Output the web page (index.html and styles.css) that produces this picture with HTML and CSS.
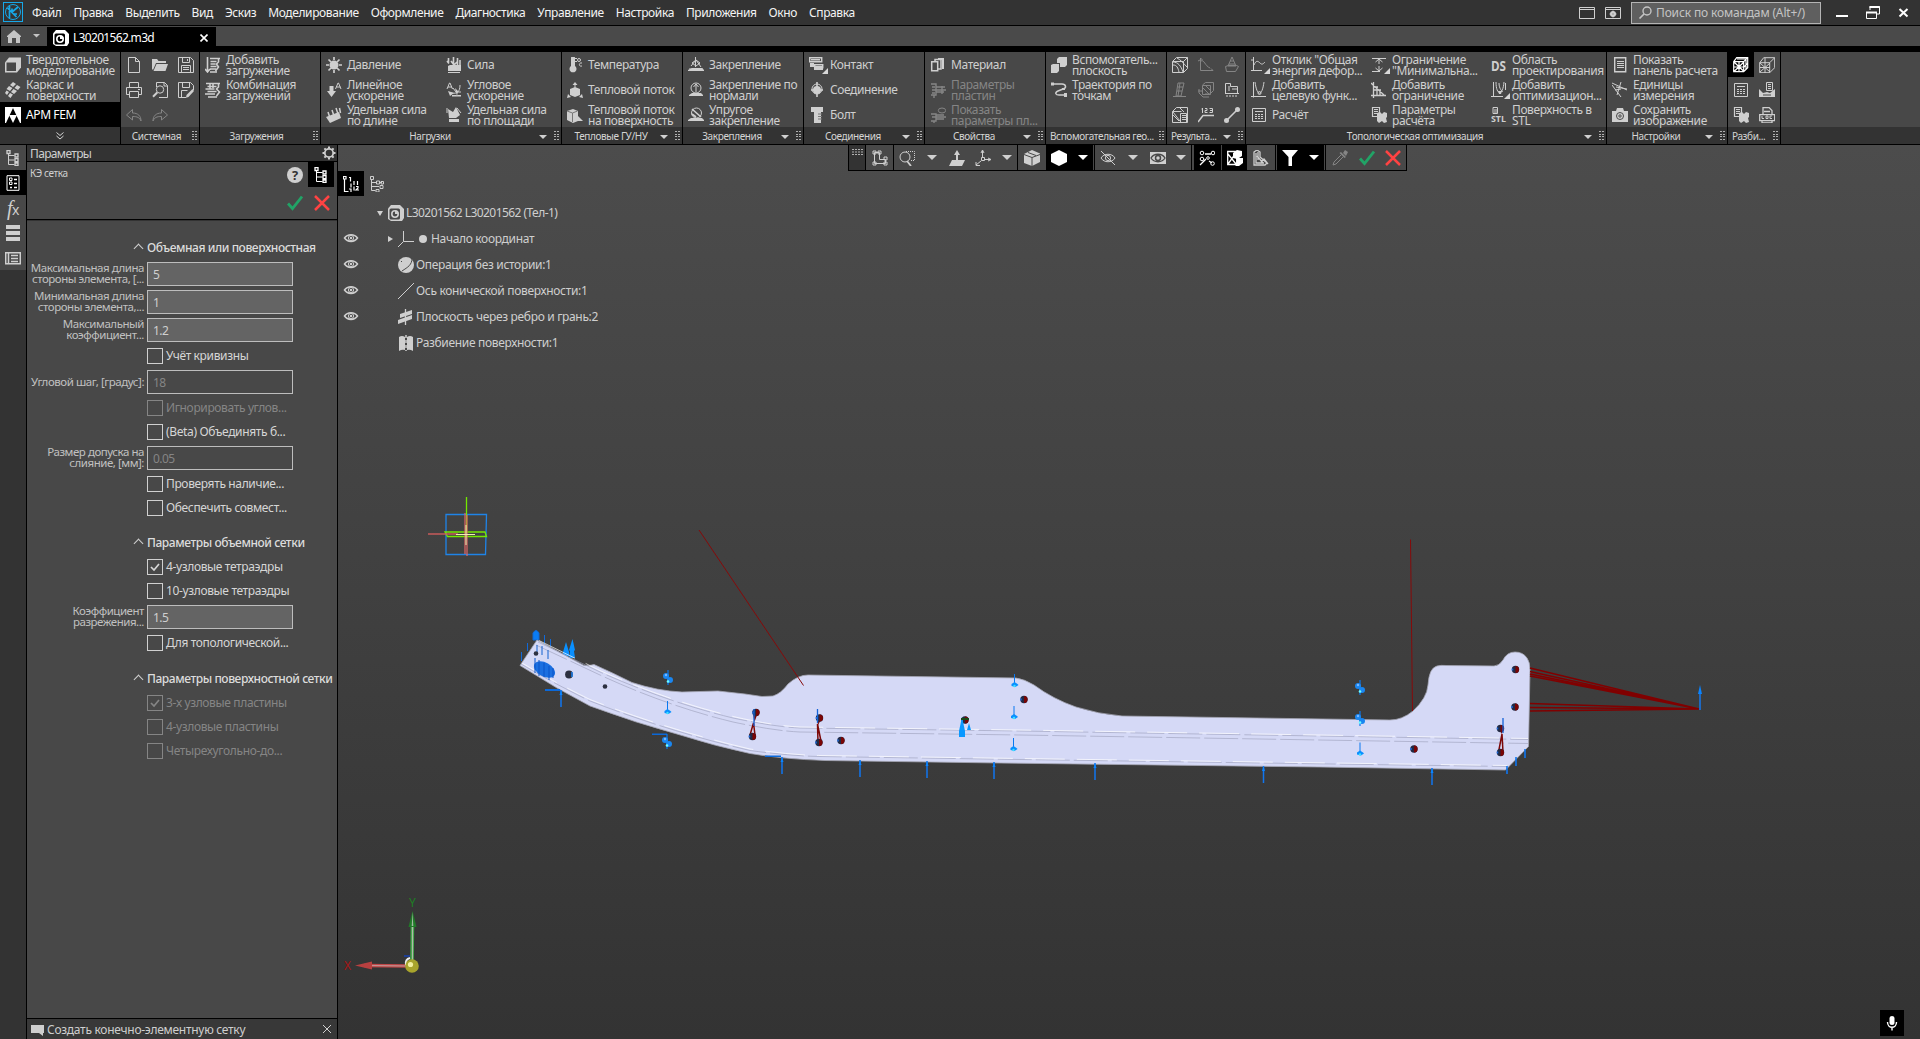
FILE: index.html
```html
<!DOCTYPE html>
<html lang="ru">
<head>
<meta charset="utf-8">
<title>L30201562.m3d</title>
<link rel="stylesheet" href="styles.css">
</head>
<body>
<svg class="defs">
<defs>
<symbol id="box" viewBox="0 0 16 16"><path class="f" d="M0 5.500l4-5h12v10l-4 5H0z"/><path d="M1.500 5.500h9.500v8.500H1.500z" fill="#484848" stroke="none"/></symbol>
<symbol id="frame" viewBox="0 0 16 16"><path class="f" d="M8 0l3 2-3 3-3-2zM12 3l3.500 2-2.500 3-3.500-2zM4 4l3.500 2L5 9 1.500 7zM8.500 7l3.500 2-3 3-3-2zM1.500 8.500L4 10l-2 3-2-2zM5 11l3 1.500L5.500 16 3 14z"/></symbol>
<symbol id="apm" viewBox="0 0 16 16"><path class="f" d="M0 0h16v16H0z"/><path d="M8 1L1 16h14z" fill="#000" stroke="none"/><path class="f" d="M4 8h8l-4 8z"/></symbol>
<symbol id="new" viewBox="0 0 16 16"><path d="M2.500.5h7l4 4v11h-11zM9.500.5v4h4"/></symbol>
<symbol id="open" viewBox="0 0 16 16"><path class="f" d="M0 2h5l1.500 2H14v2H4l-3 7-1-1zM4.500 7H16l-2.500 7H1.500z"/></symbol>
<symbol id="save" viewBox="0 0 16 16"><path d="M.5.5h12l3 3v12H.5zM4.500.5v5h7v-5M3.500 15.500v-7h9v7M9.500 2v2M5 10.500h6M5 12.500h6"/></symbol>
<symbol id="print" viewBox="0 0 16 16"><path d="M3.500 5V.5h9V5M3.500 12.500h-3v-7h15v7h-3M3.500 9.500h9v6h-9zM12 7.500h2"/></symbol>
<symbol id="preview" viewBox="0 0 16 16"><path d="M4.500 5V.5h8l3 3v12H7M12 .5v3.500h3.500"/><circle cx="8" cy="7.500" r="3.700"/><path stroke-width="2" d="M5.200 10.500L1 14.700"/></symbol>
<symbol id="saveas" viewBox="0 0 16 16"><path d="M.5.5h12l3 3V8M.5.500v15H8M4.500.5v5h7v-5M3.500 15.500v-7h6"/><path class="f" d="M8.500 13l6-6 1.500 2-5.500 6-2.500.7z"/></symbol>
<symbol id="undo" viewBox="0 0 16 16"><path d="M6.500 2.500l-6 5.500 6 5v-3.500c5 0 7 1 8.500 4.500C15 9 12 6 6.500 6z"/></symbol>
<symbol id="redo" viewBox="0 0 16 16"><path d="M9.500 2.500l6 5.500-6 5v-3.500c-5 0-7 1-8.500 4.500C1 9 4 6 9.500 6z"/></symbol>
<symbol id="addload" viewBox="0 0 16 16"><path stroke-width="1.600" d="M2.500 0v14M0 12l2.500 3L5 12M5 1.500h10M13.500 1v4l-2 2 2 3-3 4M5.500 4.500h6M5.500 7h5M5.500 9.500h6M5 12h6M5 15h7"/></symbol>
<symbol id="comb" viewBox="0 0 16 16"><path stroke-width="1.600" d="M1 1.500h14M13.500 1v4l-2 2 3 3-3 4M2.500 4.500h9M.5 7h9M2.500 9.500h9M0 12h10M3 15h9M5 2v5M8 2v4"/></symbol>
<symbol id="pressure" viewBox="0 0 16 16"><circle class="f" cx="8" cy="8" r="4.500"/><path stroke-width="1.700" d="M8 0v3M8 13v3M0 8h3M13 8h3M2.500 2.500L5 5M11 11l2.500 2.500M13.500 2.500L11 5M5 11l-2.500 2.500"/></symbol>
<symbol id="linacc" viewBox="0 0 16 16"><path class="f" d="M3.500 4h4v5H10l-4.500 6L1 9h2.500z"/><path d="M9.500 7l2.500-6h.5L15 7M10.500 5h4"/></symbol>
<symbol id="linforce" viewBox="0 0 16 16"><path class="f" d="M0 10L13 5l2 6-11 5z"/><path stroke-width="1.500" d="M2 5l2 6M6 3l2 6M10 1l2 6M13.500 1l1 5"/></symbol>
<symbol id="force" viewBox="0 0 16 16"><path class="f" d="M2 9l2-1h11v6H2zM2 15h12v1H2z"/><path stroke-width="1.600" d="M2.500 1v5M1 4l2 2.500M7.500 0v7M11.500 1v7M5 4l3 4 4-4M14 3v5"/></symbol>
<symbol id="angacc" viewBox="0 0 16 16"><path d="M1 7l2.500-6H4l2.500 6M2 5h4M14 3c0 7-3 9-9 8M7 6l3 4h5"/><path class="f" d="M9 6l2 8 1-5z M2 9l6 2-4 3zM6 13h9v1.500H6z"/></symbol>
<symbol id="areaforce" viewBox="0 0 16 16"><path class="f" d="M2 2l5 3 3-5 4 8-4 3H3zM3 12h10v3H3z"/><path d="M1 1v5M11 1l4 5"/></symbol>
<symbol id="temp" viewBox="0 0 16 16"><path class="f" d="M4 1a2 2 0 0 1 4 0v8a3.500 3.500 0 1 1-4 0z"/><path d="M8 1.500h2M8 4.500h2M15 6c-3-1-4 4 0 3"/><circle cx="12" cy="3" r="1.500"/></symbol>
<symbol id="heat" viewBox="0 0 16 16"><path class="f" d="M3 7l5-2 5 2v6l-5 2-5-2zM8 0l2.500 3h-5zM7.500 2h1v5h-1zM0 16l1-4 3 3zM16 16l-1-4-3 3z"/></symbol>
<symbol id="heatsurf" viewBox="0 0 16 16"><path class="f" d="M0 4l6-2 5 2v10l-5 2-6-3z"/><path d="M5.500 6v9M0 4l5.500 2 5-2" stroke="#777"/><path class="f" d="M11 9l5 5h-5z"/></symbol>
<symbol id="fix" viewBox="0 0 16 16"><path d="M7.500 0v10M4 6l4-3 4 3-4 3zM1 12h14M3 9l5-6 5 7"/><path class="f" d="M0 13l4-2h10l2 2v1H0z"/></symbol>
<symbol id="fixn" viewBox="0 0 16 16"><circle cx="8" cy="6" r="5"/><path d="M8 2v8M5.500 5L8 2l2.500 3"/><path class="f" d="M1 13l3-2h9l2 2v1H1z"/></symbol>
<symbol id="elastic" viewBox="0 0 16 16"><circle cx="8.500" cy="6" r="5"/><path stroke-width="1.600" d="M4 2l9 8M4 7l4 3"/><path class="f" d="M0 13l3-2h11l2 2v1H0z"/></symbol>
<symbol id="contact" viewBox="0 0 16 16"><path d="M.7.700h12v4H.7zM5.700 7.700h8v3h-8z" stroke-width="1.500"/><path class="f" d="M1 6h4v3h9v4H5v-3H1zM2 2h9v1.500H2z"/></symbol>
<symbol id="joint" viewBox="0 0 16 16"><circle class="f" cx="8" cy="8" r="4"/><circle cx="8" cy="7" r="5"/><path stroke-width="1.600" d="M8 0v15M2 8h12"/></symbol>
<symbol id="bolt" viewBox="0 0 16 16"><path class="f" d="M2 0h12v5h-2v11H5V5H2z"/><path d="M9 7h4M9 9.500h4M9 12h4" stroke="#777"/></symbol>
<symbol id="material" viewBox="0 0 16 16"><path d="M1.700 4.700h6v9h-6zM5 4V2.500h6V12H8" stroke-width="1.500"/><path class="f" d="M8 1h6v11h-2V3H8z"/></symbol>
<symbol id="plate" viewBox="0 0 16 16"><path stroke-width="1.400" d="M1 2h5v11H1M2 5h3M2 8h14M2 11h3M6 5h9M6 10h8M4 13v3M12 4v8"/></symbol>
<symbol id="platep" viewBox="0 0 16 16"><path stroke-width="1.400" d="M1 7h5v7H1M2 10h14M6 8h8M6 12h8M4 14v2"/><ellipse cx="12" cy="3.500" rx="3.700" ry="2.500"/></symbol>
<symbol id="plane" viewBox="0 0 16 16"><path class="f" d="M0 8l2-1h6v7l-2 2H0zM6 2l2-2h8v8l-2 2H9V6H6z"/></symbol>
<symbol id="path" viewBox="0 0 16 16"><path stroke-width="1.500" d="M1 2h10c4 0 5 4 1 5L7 9c-4 2-2 4 1 4h7"/><path class="f" d="M0 .500h3v3H0zM13 11h3v4h-3zM11 6h3v2h-3z"/></symbol>
<symbol id="mesh" viewBox="0 0 16 16"><path d="M.5 4.500l4-4h11v11l-4 4H.5zM.5 4.500h11v11M11.500 4.500l4-4M1 8c4 0 5 3 6 7M1 5c5 0 8 4 10 10M5 1c4 2 6 5 10 9"/></symbol>
<symbol id="graph" viewBox="0 0 16 16"><path d="M2.500 1v12.500H15M2 3L0 4M2.500 1l2 2M15 13.500l-2-2M3 4c3-2 4 5 9 7"/></symbol>
<symbol id="cone" viewBox="0 0 16 16"><path d="M8 0L4 9h8zM6 4h4M5 7h6M1.500 9.500l3-1h8l2 1-3 5h-9z"/></symbol>
<symbol id="beam" viewBox="0 0 16 16"><path d="M6 1h6L9 14H4zM8 1L6 14M6 5h5M5 9h5M1 14.500h13"/></symbol>
<symbol id="mesharr" viewBox="0 0 16 16"><path d="M4.500 3l3-2.500h8v8l-3 3M4.500 3.500h8v9h-8zM5 6l6 6M7 3l5 5M0 9h4M1 7v4l4 4h6M7 12h5"/></symbol>
<symbol id="support" viewBox="0 0 16 16"><path d="M1.500 11.500v-10h5v3h7v7M1 11.500h14M5 4v5M8 7h5M3 13v2M6 13v2M9 13v2M12 13v2"/></symbol>
<symbol id="meshdoc" viewBox="0 0 16 16"><path d="M.5 4.500l4-4h11v15H.5zM.5 4.500h9M1 8l6 6M1 5l7 9M8.500 6.500h6v9h-6zM10 8.500h4M10 10.500h4M10 12.500h4M8 1l4 4"/></symbol>
<symbol id="n123" viewBox="0 0 16 16"><path stroke-width="1.500" d="M0 15l5-6.500h11"/><path d="M4.500 1v5M3.500 2h1M7 1.500h2v2H7v2h2.500M11.500 1.500h3v4h-3M12 3.500h2"/></symbol>
<symbol id="link" viewBox="0 0 16 16"><path stroke-width="1.600" d="M2 14L14 2"/><circle class="f" cx="2.500" cy="13.500" r="2.500"/><circle class="f" cx="13.500" cy="2.500" r="2.500"/></symbol>
<symbol id="resp" viewBox="0 0 16 16"><path d="M2.500 0v14M0 13.500h11M0 3h2M3 8c2-5 4-4 6-2s3 1 5-1"/></symbol>
<symbol id="para" viewBox="0 0 16 16"><path d="M2.500 0v15.500M0 14.500h15M4 0c2 15 7 15 9 0"/><circle cx="8.500" cy="11" r="1.500"/></symbol>
<symbol id="calc" viewBox="0 0 16 16"><path d="M1.500 1.500h13v13h-13zM4 4.500h8M4 7.500h2M7 7.500h2M10 7.500h2M4 9.500h2M7 9.500h2M10 9.500h2M4 11.500h2M7 11.500h2M10 11.500h2"/></symbol>
<symbol id="minim" viewBox="0 0 16 16"><path d="M1 1.500h14M1 14.500h8M8 2v5M8 9v5M4.500 5L8 2l3.500 3M4.500 11L8 14l3.500-3"/></symbol>
<symbol id="addlim" viewBox="0 0 16 16"><path stroke-width="1.300" d="M2.500 0v16M0 13.500h15M0 1l13 12M3 5h4M3 8h7M6 5v8M9 8v5"/></symbol>
<symbol id="pars" viewBox="0 0 16 16"><path d="M1.500.5h7v9h-7zM3 2.500h4M3 4.500h4M3 6.500h4" stroke-width="1.200"/><path class="f" d="M6 6l3-1 2 2 2-2 3 1v4l-1 1 1 4-3 1-2-2-3 2-2-2z"/></symbol>
<symbol id="ds" viewBox="0 0 16 16"><text x="0" y="13.500" textLength="15" lengthAdjust="spacingAndGlyphs">DS</text></symbol>
<symbol id="opt" viewBox="0 0 16 16"><path d="M2.500 0v14.500M0 14.500h12M5 0c0 14 7 14 8 0M8 1c0 6 3 8 4 9M14.500 1v7"/><path class="f" d="M7 9h4l-1 3H8z"/></symbol>
<symbol id="stl" viewBox="0 0 16 16"><path d="M2 .500h4.500v6H2zM3 3h3M3 5h3"/><text class="sm" x="0" y="15" textLength="15" lengthAdjust="spacingAndGlyphs">STL</text></symbol>
<symbol id="panel" viewBox="0 0 16 16"><path d="M2.700.700h11v14h-11z" stroke-width="1.400"/><path d="M5 4.500h7M5 6.500h7M5 8.500h7M5 10.500h7"/></symbol>
<symbol id="units" viewBox="0 0 16 16"><path d="M0 1l15 7M0 3l9 12M9 0L5 13M4 5l11 2M3 8l6-1"/></symbol>
<symbol id="camera" viewBox="0 0 16 16"><path class="f" d="M0 4h4l1-3h6l1 3h4v11H0z"/><circle cx="8" cy="9" r="3.500" stroke="#484848"/><circle cx="8" cy="9" r="1.200" stroke="#484848"/></symbol>
<symbol id="cubemesh" viewBox="0 0 16 16"><path stroke-width="1.200" d="M.7 4.700l3-4h11v10l-4 4H.7zM.7 4.700h10v10M10.700 4.700l4-4M1 5l10 9.500M11 5L1 14.500M6 5v10M1 10h10M4 2h9M13 2v10M11 10l4-4"/></symbol>
<symbol id="meshed" viewBox="0 0 16 16"><path d="M.7 5.700l4-5h11v10l-5 5H.7zM.7 5.700h10v10M10.700 5.700l5-5M1 6l10 9M11 6L1 15M6 6v10M1 10.500h10M6 1v5"/></symbol>
<symbol id="saveres" viewBox="0 0 16 16"><path d="M7.500.5h6v8h-6zM9 2.500h3M9 4.500h3M9 6.500h3"/><path class="f" d="M0 7l4 4 4-1 3 1 5-4v8H0z"/><path d="M4 13h8" stroke="#484848"/></symbol>
<symbol id="log" viewBox="0 0 16 16"><path d="M4 7V.5h6l3 3V7M5 4.500h6M.7 7.700h15v6h-15zM3 13v3h10v-3" stroke-width="1.300"/><path d="M3 9v2.500h2M7 9h2v2.500H7zM13 9h-2v2.500h2"/></symbol>
<symbol id="doc3d" viewBox="0 0 16 16"><path class="f" d="M0 3.500L3 0h9l4 4v9l-2 3H3l-3-2z"/><rect x="1.500" y="3.500" width="10.500" height="11" rx="1.500" fill="var(--in)" stroke="none"/><circle cx="7" cy="9" r="3.200" stroke-width="1.600"/><path d="M7 9V5.500A3.500 3.500 0 0 1 10.500 9z" class="f"/></symbol>
<symbol id="tree" viewBox="0 0 16 16"><path d="M3.500 3v11.500h6M3.500 5.500h6M3.500 10h6"/><path d="M2 .5h3v3H2zM10 4h3v3h-3zM10 8.700h3v3h-3zM10 13h3v2.500h-3z" stroke-width="1.300"/></symbol>
<symbol id="treenum" viewBox="0 0 16 16"><path stroke-width="1.200" d="M.5 .500h2.500V3H.500zM1.500 3v12.500h4M6 1.500h1.500v4M8 7.500v4M6 13h2v3M11 5v4M14.500 5v4M11 10.500v4M13 10.500h2v1.500l-2 2h3"/></symbol>
<symbol id="treeflat" viewBox="0 0 16 16"><path d="M1.500.5h3v3h-3zM2.500 4v10.500h4M3 6.500h4M7.500 5h3v3h-3zM11 6.500h2M12 5.500h2.500V8H12zM3 10.500h7M11 9.500h3v3h-3zM7 13.500h3v2.500H7z"/></symbol>
<symbol id="params" viewBox="0 0 16 16"><path d="M2 .700h12v14.600H2zM4.500 3h2.500v2.500H4.500zM4.500 7h2.500v2.500H4.500z"/><path d="M9 4.500h3M9 8.500h3M5 12.500h2M9 12.500h3" stroke-width="1.500"/></symbol>
<symbol id="rows" viewBox="0 0 16 16"><path class="f" d="M1 0h14v4H1zM1 6h14v4H1zM1 12h14v4H1z"/></symbol>
<symbol id="side" viewBox="0 0 16 16"><path d="M.7 2.700h14.600v11H.7zM3.500 3v11" stroke-width="1.500"/><path d="M6 5.500h7M6 8.500h7M6 11.500h7" stroke-width="1.700"/></symbol>
<symbol id="eye" viewBox="0 0 16 16"><path stroke-width="1.500" d="M1.500 8c3-4.500 10-4.500 13 0-3 4.500-10 4.500-13 0z"/><circle cx="8" cy="8" r="2.600"/><circle class="f" cx="8" cy="8" r="1.200"/></symbol>
<symbol id="eyeoff" viewBox="0 0 16 16"><path d="M1 8c3-5 11-5 14 0-3 5-11 5-14 0zM1 1l14 14"/><circle cx="8" cy="8" r="2.600"/></symbol>
<symbol id="gear" viewBox="0 0 16 16"><circle cx="8" cy="8" r="4.200" stroke-width="1.800"/><path stroke-width="2" d="M8 1.500v2M8 12.500v2M1.500 8h2M12.500 8h2M3.400 3.400l1.400 1.400M11.200 11.200l1.400 1.400M12.600 3.400l-1.400 1.400M4.800 11.200l-1.400 1.400"/></symbol>
<symbol id="ok" viewBox="0 0 16 16"><path d="M1 8.500l4.500 5L15 1.500" stroke="#21a366" stroke-width="2.800"/></symbol>
<symbol id="no" viewBox="0 0 16 16"><path d="M1 1l14 14M15 1L1 15" stroke="#ff4343" stroke-width="2.500"/></symbol>
<symbol id="origin" viewBox="0 0 16 16"><path d="M5.500 0v10.500H16M5.500 10.500L0 16"/></symbol>
<symbol id="ball" viewBox="0 0 16 16"><circle class="f" cx="8" cy="8" r="8"/><path d="M14 1c0 7-4 9-10 13M3 4l1 1" stroke="#484848"/></symbol>
<symbol id="axis" viewBox="0 0 16 16"><path d="M0 16L16 0"/></symbol>
<symbol id="plane2" viewBox="0 0 16 16"><path class="f" d="M2 5l12-4v4L2 9zM0 11l14-5v4L0 15z"/><path d="M7.500 0v16" stroke-width="1.300"/></symbol>
<symbol id="split" viewBox="0 0 16 16"><path class="f" d="M1 2q3-2 6 0v13q-3-1-6 1zM9 2q3-2 6 0v14q-3-2-6-1z"/><path d="M8 0v16" stroke-dasharray="3 2" stroke-width="1.500"/></symbol>
<symbol id="lcs" viewBox="0 0 16 16"><path d="M2.500 2.500h5v7h6v4h-11zM1 1h3v3H1zM6 1h3v3H6zM1 12h3v3H1zM12 12h3v3h-3zM12 7h3v3h-3z"/></symbol>
<symbol id="zoomw" viewBox="0 0 16 16"><circle cx="6" cy="7" r="5"/><path d="M8 11l4 5" stroke-width="1.800"/><path d="M7 1.500h8.500v9H11" stroke-dasharray="1 1"/></symbol>
<symbol id="normal" viewBox="0 0 16 16"><path class="f" d="M3 10h4V5H5l3-5 3 5H9v5h7l-3 6H0z"/></symbol>
<symbol id="axes" viewBox="0 0 16 16"><path d="M6.500 7.500h3v3h-3zM7.500 7V1M10 9.500h5M6 11l-5 4M6 3l1.500-3L9 3M13 8l3 1.500-3 1.500M1 12v3.500h4"/></symbol>
<symbol id="cube" viewBox="0 0 16 16"><path class="f" d="M0 4l8-4 8 3.500V12l-8 4-8-3z"/><path d="M0 4.500l8 3 8-3M8 7.500V16M4 2.500l8 3" stroke="#484848"/></symbol>
<symbol id="hex" viewBox="0 0 16 16"><path class="f" d="M8 0l8 4v8l-8 4-8-4V4z"/></symbol>
<symbol id="eyebox" viewBox="0 0 16 16"><path class="f" d="M0 2h16v12H0z"/><path d="M1 8c3-5 11-5 14 0-3 5-11 5-14 0z" stroke="#484848" stroke-width="1.300"/><circle cx="8" cy="8" r="2.500" stroke="#484848" stroke-width="1.500"/></symbol>
<symbol id="dots" viewBox="0 0 16 16"><path d="M1 15L7 9M6 4h6M10 11l3 2" stroke-width="1.300"/><circle cx="3" cy="3" r="1.800"/><circle cx="3" cy="9" r="1.800"/><circle cx="14" cy="3" r="1.800"/><circle cx="9" cy="8" r="1.300"/><circle cx="13.500" cy="13.500" r="1.800"/></symbol>
<symbol id="cubes" viewBox="0 0 16 16"><path d="M.7 1.500h9v13h-9zM1 14L9 3M1 4l8 10" stroke-width="1.300"/><path class="f" d="M6 3l4-3 5 1v5l-3 2h4v5l-4 3H8l2-2V9L6 8z"/></symbol>
<symbol id="lmesh" viewBox="0 0 16 16"><path stroke-width="1.300" d="M1 2l3-2 3 2v5l7 6-2 2H1zM3 3v10h8M4 6l6 7M5 2v8M8 12l3-3 4 5"/></symbol>
<symbol id="filter" viewBox="0 0 16 16"><path class="f" d="M0 0h16L10 7v9H6.500V7z"/></symbol>
<symbol id="pipette" viewBox="0 0 16 16"><path d="M9 5L2 12l-1 3 3-1 7-7" /><path class="f" d="M9 2l5 5-1.500 1-5-5zM11 3l2-3 3 2-2 4z"/></symbol>
<symbol id="home" viewBox="0 0 14 13"><path class="f" d="M0 6l7-6 7 6v1h-1v6H9V8H5v5H1V7H0z"/></symbol>
</defs>
</svg>

<header class="menubar">
  <svg class="logo" viewBox="0 0 20 20"><rect x=".5" y=".5" width="19" height="19"/><circle cx="10" cy="10" r="7.500"/><path d="M6.500 4v12M4.500 6l9 9M15 5l-6 5M9 6.500V10M11 12h3" stroke-width="1.700"/></svg>
  <nav><span>Файл</span><span>Правка</span><span>Выделить</span><span>Вид</span><span>Эскиз</span><span>Моделирование</span><span>Оформление</span><span>Диагностика</span><span>Управление</span><span>Настройка</span><span>Приложения</span><span>Окно</span><span>Справка</span></nav>
  <div class="wincontrols">
    <svg class="i" viewBox="0 0 16 16"><path d="M.5 2.500h15v11H.5zM.5 4.500h15"/></svg>
    <svg class="i" viewBox="0 0 16 16"><path d="M.5 2.500h15v11H.5zM.5 4.500h15"/><circle cx="8" cy="9" r="2" stroke-width="2"/><path d="M8 5.500v7M4.500 9h7"/></svg>
    <div class="search"><svg class="i" viewBox="0 0 16 16"><circle cx="10" cy="6" r="4" stroke-width="1.400"/><path d="M7 9l-4.500 4.500" stroke-width="1.700"/></svg><span>Поиск по командам (Alt+/)</span></div>
    <svg class="i w" viewBox="0 0 16 16"><path d="M2 11h12" stroke-width="2"/></svg>
    <svg class="i w" viewBox="0 0 16 16"><path d="M1.500 7.500h10v6h-10zM5 5V1.500h9.500V9H12" /><path d="M1 7.500h11M4.500 2h10" stroke-width="2"/></svg>
    <svg class="i w" viewBox="0 0 16 16"><path d="M3.500 4l8 7.500M11.500 4l-8 7.500" stroke-width="2"/></svg>
  </div>
</header>

<div class="tabs">
  <div class="homebtn"><svg class="homeicon"><use href="#home"/></svg><svg class="caret" viewBox="0 0 7 4"><path class="f" d="M0 0h7L3.500 3.500z"/></svg></div>
  <div class="tab"><svg class="i"><use href="#doc3d"/></svg><span>L30201562.m3d</span><svg class="x" viewBox="0 0 8 8"><path d="M.5.500l7 7M7.500.500l-7 7" stroke-width="1.600"/></svg></div>
</div>

<div class="ribbon">
  <section class="modes">
    <div class="cells"><div class="cmd"><svg class="i"><use href="#box"/></svg><span>Твердотельное<br>моделирование</span></div><div class="cmd"><svg class="i"><use href="#frame"/></svg><span>Каркас и<br>поверхности</span></div><div class="cmd on"><svg class="i"><use href="#apm"/></svg><span>APM FEM</span></div></div>
    <footer><svg class="chev" viewBox="0 0 8 8"><path d="M.5.500L4 3.500 7.500.500M.5 4L4 7l3.500-3"/></svg></footer>
  </section>
  <section class="icons3">
    <div class="cells"><b><svg class="i"><use href="#new"/></svg></b><b><svg class="i"><use href="#print"/></svg></b><b class="dim"><svg class="i"><use href="#undo"/></svg></b><b><svg class="i"><use href="#open"/></svg></b><b><svg class="i"><use href="#preview"/></svg></b><b class="dim"><svg class="i"><use href="#redo"/></svg></b><b><svg class="i"><use href="#save"/></svg></b><b><svg class="i"><use href="#saveas"/></svg></b></div>
    <footer><span>Системная</span><i class="grip"></i></footer>
  </section>
  <section class="c1">
    <div class="cells"><div class="cmd"><svg class="i"><use href="#addload"/></svg><span>Добавить<br>загружение</span></div><div class="cmd"><svg class="i"><use href="#comb"/></svg><span>Комбинация<br>загружений</span></div></div>
    <footer><span>Загружения</span><i class="grip"></i></footer>
  </section>
  <section class="c2">
    <div class="cells"><div class="cmd"><svg class="i"><use href="#pressure"/></svg><span>Давление</span></div><div class="cmd"><svg class="i"><use href="#linacc"/></svg><span>Линейное<br>ускорение</span></div><div class="cmd"><svg class="i"><use href="#linforce"/></svg><span>Удельная сила<br>по длине</span></div><div class="cmd"><svg class="i"><use href="#force"/></svg><span>Сила</span></div><div class="cmd"><svg class="i"><use href="#angacc"/></svg><span>Угловое<br>ускорение</span></div><div class="cmd"><svg class="i"><use href="#areaforce"/></svg><span>Удельная сила<br>по площади</span></div></div>
    <footer><span>Нагрузки</span><i class="drop"></i><i class="grip"></i></footer>
  </section>
  <section class="c1">
    <div class="cells"><div class="cmd"><svg class="i"><use href="#temp"/></svg><span>Температура</span></div><div class="cmd"><svg class="i"><use href="#heat"/></svg><span>Тепловой поток</span></div><div class="cmd"><svg class="i"><use href="#heatsurf"/></svg><span>Тепловой поток<br>на поверхность</span></div></div>
    <footer><span>Тепловые ГУ/НУ</span><i class="drop"></i><i class="grip"></i></footer>
  </section>
  <section class="c1">
    <div class="cells"><div class="cmd"><svg class="i"><use href="#fix"/></svg><span>Закрепление</span></div><div class="cmd"><svg class="i"><use href="#fixn"/></svg><span>Закрепление по<br>нормали</span></div><div class="cmd"><svg class="i"><use href="#elastic"/></svg><span>Упругое<br>закрепление</span></div></div>
    <footer><span>Закрепления</span><i class="drop"></i><i class="grip"></i></footer>
  </section>
  <section class="c1">
    <div class="cells"><div class="cmd sub"><svg class="i"><use href="#contact"/></svg><span>Контакт</span></div><div class="cmd"><svg class="i"><use href="#joint"/></svg><span>Соединение</span></div><div class="cmd"><svg class="i"><use href="#bolt"/></svg><span>Болт</span></div></div>
    <footer><span>Соединения</span><i class="drop"></i><i class="grip"></i></footer>
  </section>
  <section class="c1">
    <div class="cells"><div class="cmd"><svg class="i"><use href="#material"/></svg><span>Материал</span></div><div class="cmd dim"><svg class="i"><use href="#plate"/></svg><span>Параметры<br>пластин</span></div><div class="cmd dim"><svg class="i"><use href="#platep"/></svg><span>Показать<br>параметры пл...</span></div></div>
    <footer><span>Свойства</span><i class="drop"></i><i class="grip"></i></footer>
  </section>
  <section class="c1">
    <div class="cells"><div class="cmd"><svg class="i"><use href="#plane"/></svg><span>Вспомогатель...<br>плоскость</span></div><div class="cmd"><svg class="i"><use href="#path"/></svg><span>Траектория по<br>точкам</span></div></div>
    <footer><span class="long">Вспомогательная гео...</span><i class="grip"></i></footer>
  </section>
  <section class="icons3">
    <div class="cells"><b><svg class="i"><use href="#mesh"/></svg></b><b class="dim"><svg class="i"><use href="#beam"/></svg></b><b><svg class="i"><use href="#meshdoc"/></svg></b><b class="dim"><svg class="i"><use href="#graph"/></svg></b><b class="dim"><svg class="i"><use href="#mesharr"/></svg></b><b><svg class="i"><use href="#n123"/></svg></b><b class="dim"><svg class="i"><use href="#cone"/></svg></b><b><svg class="i"><use href="#support"/></svg></b><b><svg class="i"><use href="#link"/></svg></b></div>
    <footer><span class="long">Результа...</span><i class="drop"></i><i class="grip"></i></footer>
  </section>
  <section class="c3">
    <div class="cells"><div class="cmd sub"><svg class="i"><use href="#resp"/></svg><span>Отклик "Общая<br>энергия дефор...</span></div><div class="cmd"><svg class="i"><use href="#para"/></svg><span>Добавить<br>целевую функ...</span></div><div class="cmd"><svg class="i"><use href="#calc"/></svg><span>Расчёт</span></div><div class="cmd sub"><svg class="i"><use href="#minim"/></svg><span>Ограничение<br>"Минимальна...</span></div><div class="cmd"><svg class="i"><use href="#addlim"/></svg><span>Добавить<br>ограничение</span></div><div class="cmd"><svg class="i"><use href="#pars"/></svg><span>Параметры<br>расчёта</span></div><div class="cmd"><svg class="i"><use href="#ds"/></svg><span>Область<br>проектирования</span></div><div class="cmd sub"><svg class="i"><use href="#opt"/></svg><span>Добавить<br>оптимизацион...</span></div><div class="cmd"><svg class="i"><use href="#stl"/></svg><span>Поверхность в<br>STL</span></div></div>
    <footer><span>Топологическая оптимизация</span><i class="drop"></i><i class="grip"></i></footer>
  </section>
  <section class="c1">
    <div class="cells"><div class="cmd"><svg class="i"><use href="#panel"/></svg><span>Показать<br>панель расчета</span></div><div class="cmd"><svg class="i"><use href="#units"/></svg><span>Единицы<br>измерения</span></div><div class="cmd"><svg class="i"><use href="#camera"/></svg><span>Сохранить<br>изображение</span></div></div>
    <footer><span>Настройки</span><i class="drop"></i><i class="grip"></i></footer>
  </section>
  <section class="icons2">
    <div class="cells"><b class="on"><svg class="i"><use href="#cubemesh"/></svg></b><b><svg class="i"><use href="#calc"/></svg></b><b><svg class="i"><use href="#pars"/></svg></b><b><svg class="i"><use href="#meshed"/></svg></b><b><svg class="i"><use href="#saveres"/></svg></b><b><svg class="i"><use href="#log"/></svg></b></div>
    <footer><span class="long">Разби...</span><i class="grip"></i></footer>
  </section>
  <section class="rest"><div class="cells"></div><footer></footer></section>
</div>

<main>
  <aside class="strip">
    <b><svg class="i"><use href="#tree"/></svg></b><b class="on"><svg class="i"><use href="#params"/></svg></b><b class="fx">f<sub>x</sub></b><b><svg class="i"><use href="#rows"/></svg></b><b><svg class="i"><use href="#side"/></svg></b>
  </aside>
  <aside class="panel">
    <div class="title"><span>Параметры</span><svg class="i"><use href="#gear"/></svg></div>
    <div class="subject">
      <div class="line"><span>КЭ сетка</span><b class="help">?</b><b class="treebtn"><svg class="i"><use href="#tree"/></svg></b></div>
      <div class="line act"><svg class="i"><use href="#ok"/></svg><svg class="i"><use href="#no"/></svg></div>
    </div>
    <div class="form">
      <h2>Объемная или поверхностная</h2>
      <div class="row"><label>Максимальная длина<br>стороны элемента, [...</label><div class="input">5</div></div>
      <div class="row"><label>Минимальная длина<br>стороны элемента,...</label><div class="input">1</div></div>
      <div class="row"><label>Максимальный<br>коэффициент...</label><div class="input">1.2</div></div>
      <div class="check"><i></i>Учёт кривизны</div>
      <div class="row"><label>Угловой шаг, [градус]:</label><div class="input off">18</div></div>
      <div class="check off"><i></i>Игнорировать углов...</div>
      <div class="check"><i></i>(Beta) Объединять б...</div>
      <div class="row"><label>Размер допуска на<br>слияние, [мм]:</label><div class="input off">0.05</div></div>
      <div class="check"><i></i>Проверять наличие...</div>
      <div class="check"><i></i>Обеспечить совмест...</div>
      <h2>Параметры объемной сетки</h2>
      <div class="check"><i><svg viewBox="0 0 14 14"><path d="M3 7l3 3 5-6"/></svg></i>4-узловые тетраэдры</div>
      <div class="check"><i></i>10-узловые тетраэдры</div>
      <div class="row"><label>Коэффициент<br>разрежения...</label><div class="input">1.5</div></div>
      <div class="check"><i></i>Для топологической...</div>
      <h2 class="last">Параметры поверхностной сетки</h2>
      <div class="check off"><i><svg viewBox="0 0 14 14"><path d="M3 7l3 3 5-6"/></svg></i>3-х узловые пластины</div>
      <div class="check off"><i></i>4-узловые пластины</div>
      <div class="check off"><i></i>Четырехугольно-до...</div>
    </div>
    <div class="status"><svg viewBox="0 0 13 11"><path class="f" d="M0 0h13v8h-1v3L8 8H0z"/></svg><span>Создать конечно-элементную сетку</span><svg class="close" viewBox="0 0 8 8"><path d="M0 0l8 8M8 0L0 8"/></svg></div>
  </aside>

  <div class="viewport">
    <svg class="scene" viewBox="338 145 1582 894">
      <defs>
        <g id="pin" fill="#0a78f0" stroke="#0a78f0"><path d="M0-11V0" stroke-width="1"/><path d="M-3-1l3-2 3 2 1 1-3 2-4-1z" stroke="none" fill="#0a90ff"/><circle cy="1" r="1.200" fill="#40e0ff" stroke="none"/></g>
        <g id="blob"><path d="M0-7V8" stroke="#0a78f0" stroke-width="1.200"/><circle cx="-2" cy="-1" r="3" fill="#1a86f0"/><circle cx="2" cy="3" r="3" fill="#1a86f0"/><circle cx="0" cy="4.500" r="1.300" fill="#6fffff"/><circle cx="-2" cy="-2" r="1.200" fill="#7ab8ff"/></g>
        <g id="foot"><path d="M0 0v17" stroke="#1076f0" stroke-width="1.500"/><path d="M-1.500 5L0 0l1.500 5z" fill="#0a84ff"/></g>
        <g id="hole"><circle r="3.700" fill="#222a44"/><path d="M0-3.500a3.500 3.500 0 0 1 0 7z" fill="#7a0505"/><path d="M-3 1v-2" stroke="#1b6be0" stroke-width="1.500"/></g>
      </defs>
      <path fill="#0a7cf5" stroke="#1169d8" d="M533 633q3-5 6 0v7h-6zM521.500 652v9M527.500 643v8M544.500 635v9M550.500 639v8"/>
      <path fill="#0a90ff" d="M566 642l3 10v4h-6v-4zM572.500 639l2.500 11-1 1 1 7h-6l1-7-1-1z"/>
      <path class="body" d="M520 665.500L537 640L584 665.500Q589 666 594 664.500Q613 673 632 682.500Q658 691 682 692L718 691L745 694L762 696.500L773 696Q781 693.500 788 684Q798 675 808 675L1016 678Q1024 679 1034 685Q1053 699 1076 707Q1098 714 1122 716L1390 720Q1402 720 1413 711Q1427 698 1428 685Q1429 668 1437 666Q1441 665 1446 665.500L1494 666Q1499 666 1503 660Q1507 652 1515 652Q1523 652 1527 658Q1530 662 1530 670L1528.500 746.500L1505.500 770L1320 767L1000 763L825 760.500Q782 759 750 753.500Q715 746 682 735.500Q636 723 590 706L557 688Z"/>
      <g class="edges"><path d="M538 642L600 672Q667 702 733 718Q775 727 800 728L1020 731L1528 739.500M536 645L600 675Q667 706 733 722Q775 731 800 732L1020 735L1528 743.500M521 664Q553 683 590 701Q667 731 750 750.500Q790 756 820 756.500L1020 759.500L1507 766.500"/></g>
      <g class="light"><path d="M539 640.500L600 670.500Q667 700.500 733 716.500Q775 726 800 727L1020 730L1528 738.500M522 663Q553 681.500 590 699.500Q667 729.500 750 749Q790 755 820 755.500L1020 758.500L1507 765.500"/></g>
      <path d="M699 530L803.500 685.500M1410.500 539.500L1412.500 711" stroke="#860a0a" fill="none"/>
      <path d="M1530 668L1699 709L1530 671.500M1530 674L1699 709L1530 676M1530 703.500L1699 709L1530 707.500M1530 711L1699 709" stroke="#800000" stroke-width="1.400" fill="none"/>
      <path d="M1700 710v-20" stroke="#1478f0" stroke-width="1.500"/><path d="M1698 694l2-9 2 9z" fill="#0a84ff"/>
      <ellipse cx="544.500" cy="669.500" rx="11.500" ry="7" transform="rotate(30 544.500 669.500)" fill="#1b6fe0"/><path d="M535 658v15M539 660v16M544 663v14M549 666v14M553 668v10" stroke="#0a55c8"/><path d="M537 645v7M542 646v9M548 650v9" stroke="#1463d0"/>
      <g fill="#2c3040"><circle cx="536" cy="653.500" r="2.300"/><circle cx="569" cy="674.500" r="3.900"/><circle cx="605" cy="686.500" r="2.300"/></g><path d="M572 672v5" stroke="#1b80f0" stroke-width="1.500"/>
      <path d="M545 689h15v2h-15zM652 733.500h15v1.500h-15zM765 755.500h16v1.500h-16z" fill="#0b68d8"/>
      <use href="#foot" x="561" y="690"/><use href="#foot" x="782" y="757"/><use href="#foot" x="860" y="760"/><use href="#foot" x="927" y="761"/><use href="#foot" x="994" y="762"/><use href="#foot" x="1095" y="763"/><use href="#foot" x="1263.500" y="766"/><use href="#foot" x="1432" y="768"/>
      <path d="M1507 766v8M1516 757v9M1525 749v9" stroke="#1076f0" stroke-width="1.600"/>
      <use href="#blob" x="668" y="677"/><use href="#blob" x="667" y="741"/><use href="#blob" x="1360" y="687"/><use href="#blob" x="1360" y="718"/>
      <use href="#pin" x="667.500" y="712"/><use href="#pin" x="1014.500" y="685"/><use href="#pin" x="1014" y="717"/><use href="#pin" x="1013.500" y="749"/><use href="#pin" x="1360" y="753.500"/>
      <g stroke="#7c0808" stroke-width="1.500" fill="none"><path d="M753.500 723l-3.500 12h5zM817.500 724l.5 18 3-1zM1502 734l-3.500 18h4.500z"/><path fill="#7c0808" d="M752.500 711h6l-4 11zM817 718h5l-4 7zM1498 728h5l-1 6z" stroke="none"/></g>
      <use href="#hole" x="756" y="712.500"/><use href="#hole" x="752.500" y="736.500"/><use href="#hole" x="819.500" y="718"/><use href="#hole" x="819" y="742.500"/><use href="#hole" x="841" y="740.500"/><use href="#hole" x="965" y="720"/><use href="#hole" x="1024" y="699.500"/><use href="#hole" x="1414" y="749"/><use href="#hole" x="1515.500" y="669.500"/><use href="#hole" x="1515" y="707"/><use href="#hole" x="1500.500" y="728.500"/><use href="#hole" x="1500.500" y="752.500"/>
      <path d="M817.500 709v14M754 709v17M1503 718v15" stroke="#1463d8" stroke-width="1.300"/>
      <path d="M962 717l3 14v6h-6v-6zM969 723l2 7h-4z" fill="#0a98ff"/><path d="M961 719h8" stroke="#184a18" stroke-width="2"/>

      <g fill="none"><path d="M446 514.500h40.500L485.500 554.500H446z" stroke="#1f84e8" stroke-width="1.300"/><path d="M445 532h40l1.500 4.500h-39z" stroke="#74e800" stroke-width="1.300"/><path d="M466.500 497v36" stroke="#74e800" stroke-width="1.300"/><path d="M465 513v41M467 515v41" stroke="#e06868" stroke-width="1.200"/><path d="M428 534h30" stroke="#d05c5c" stroke-width="1.400"/><path d="M456 534.500h19M466 525v20" stroke="#f4f0b0"/></g>

      <g><path d="M412 966l.5-44" stroke="#48a850" stroke-width="3.500"/><path d="M412.500 966v-44" stroke="#b0b8a8"/><path d="M408.500 927l4-16 4 16z" fill="#207a28"/><path d="M411.700 926l.8-14 .8 14z" fill="#9fb89f"/><path d="M410 966l-46-.5" stroke="#c04848" stroke-width="3.500"/><path d="M408 966l-44-.5" stroke="#c0a0a0"/><path d="M372 961.500l-17 4 17 4z" fill="#b84040"/><path d="M404 956h6" stroke="#1640b0" stroke-width="1.500"/><path d="M406 965q-1-6 4-7" stroke="#eee" stroke-width="2" fill="none"/><circle cx="412" cy="966" r="6.800" fill="#a8a42c"/><circle cx="410.500" cy="964.500" r="2.600" fill="#f2efa0"/><text class="ax" x="344" y="970" fill="#a81414">X</text><text class="ax" x="409" y="907" fill="#1d8024">Y</text></g>
    </svg>

    <div class="toolbar">
      <i class="tgrip"><svg viewBox="0 0 11 6"><path d="M0 .500h11M0 3h11M0 5.500h11" stroke-dasharray="2 1"/></svg></i>
      <div class="tg"><b class="m27"><svg class="i"><use href="#lcs"/></svg></b></div>
      <div class="tg"><b><svg class="i"><use href="#zoomw"/></svg></b><b class="wide"><i class="drop"></i></b><b class="m25"><svg class="i"><use href="#normal"/></svg></b><b class="m27"><svg class="i"><use href="#axes"/></svg></b><b class="n"><i class="drop"></i></b></div>
      <div class="tg nb"><b class="m28"><svg class="i"><use href="#cube"/></svg></b></div>
      <div class="tg on nb"><b><svg class="i"><use href="#hex"/></svg></b><b class="n"><i class="drop"></i></b></div>
      <div class="tg bl"><b><svg class="i"><use href="#eyeoff"/></svg></b><b class="wide"><i class="drop"></i></b><b class="m25"><svg class="i"><use href="#eyebox"/></svg></b><b class="n"><i class="drop"></i></b></div>
      <div class="tg on gap2"><b><svg class="i"><use href="#dots"/></svg></b></div>
      <div class="tg on nb gap1"><b class="m25"><svg class="i"><use href="#cubes"/></svg></b></div>
      <div class="tg"><b class="m28"><svg class="i"><use href="#lmesh"/></svg></b></div>
      <div class="tg on nb gap1"><b><svg class="i"><use href="#filter"/></svg></b><b class="n"><i class="drop"></i></b></div>
      <div class="tg bl"><b class="m27 dim"><svg class="i"><use href="#pipette"/></svg></b><b class="m27"><svg class="i"><use href="#ok"/></svg></b><b><svg class="i"><use href="#no"/></svg></b></div>
    </div>

    <div class="treebar"><b class="on"><svg class="i"><use href="#treenum"/></svg></b><b><svg class="i"><use href="#treeflat"/></svg></b></div>
    <ul class="modeltree">
      <li class="root"><i class="down"></i><svg class="i"><use href="#doc3d"/></svg><span>L30201562 L30201562 (Тел-1)</span></li>
      <li><svg class="i eye"><use href="#eye"/></svg><i class="right"></i><svg class="i"><use href="#origin"/></svg><i class="dot"></i><span>Начало координат</span></li>
      <li><svg class="i eye"><use href="#eye"/></svg><svg class="i first"><use href="#ball"/></svg><span>Операция без истории:1</span></li>
      <li><svg class="i eye"><use href="#eye"/></svg><svg class="i first"><use href="#axis"/></svg><span>Ось конической поверхности:1</span></li>
      <li><svg class="i eye"><use href="#eye"/></svg><svg class="i first"><use href="#plane2"/></svg><span>Плоскость через ребро и грань:2</span></li>
      <li><span class="eye"></span><svg class="i first"><use href="#split"/></svg><span>Разбиение поверхности:1</span></li>
    </ul>
    <div class="mic"><svg class="i" viewBox="0 0 16 16"><rect class="f" x="5.500" y="1" width="5" height="9" rx="2.500"/><path d="M3.500 7c0 7 9 7 9 0M8 12v3.500" stroke-width="1.400"/></svg></div>
  </div>
</main>
</body>
</html>
```
FILE: styles.css
```css
* { box-sizing: border-box; }
html, body { margin: 0; height: 100%; }
body {
  --in: #484848;
  display: flex; flex-direction: column; width: 1920px; height: 1039px; overflow: hidden;
  background: #000; color: #cfcfcf;
  font: 12px/16px "Noto Sans", "Open Sans", sans-serif; letter-spacing: -.4px; white-space: nowrap;
}
svg { fill: none; stroke: currentColor; flex: none; display: block; }
.f { fill: currentColor; stroke: none; }
.defs { position: absolute; width: 0; height: 0; }
.i { width: 16px; height: 16px; }
b { font-weight: 400; display: flex; align-items: center; justify-content: center; }
.on { background: #000; color: #fff; --in: #000; }
symbol text { font: 700 15px "Open Sans", sans-serif; fill: currentColor; stroke: none; letter-spacing: 0; }
symbol text.sm { font-size: 9px; }

.menubar { height: 25px; flex: none; display: flex; background: #333; color: #f4f4f4; }
.logo { width: 20px; height: 20px; margin: 2px 0 0 3px; stroke: #17a8e8; fill: none; }
.menubar nav { display: flex; gap: 12px; margin-left: 9px; line-height: 25px; }
.menubar nav span { letter-spacing: -.4px; }
.wincontrols { margin-left: auto; display: flex; align-items: center; gap: 10px; padding-right: 6px; color: #d0d0d0; }
.search { width: 190px; height: 22px; display: flex; align-items: center; gap: 3px; padding-left: 5px; border: 1px solid #b4b4b4; background: #5f5f5f; color: #c4c4c4; letter-spacing: -.15px; }
.w { color: #fff; margin-left: 3px; margin-right: 2px; }
.w + .w { margin-left: 3px; }

.tabs { height: 26px; flex: none; display: flex; margin-top: 1px; background: linear-gradient(#4a4a4a 20px, #000 20px); }
.homebtn { width: 47px; height: 20px; border-left: 1px solid #000; background: #4a4a4a; display: flex; align-items: center; padding-left: 6px; gap: 12px; color: #c4c4c4; }
.homeicon { width: 14px; height: 13px; }
.caret { width: 7px; height: 4px; }
.tab { width: 169px; height: 25px; margin-top: 1px; background: #000; --in: #000; color: #fff; display: flex; align-items: center; padding: 0 8px 4px 6px; gap: 4px; letter-spacing: -.68px; }
.x { width: 8px; height: 8px; margin-left: auto; }

.ribbon { height: 93px; flex: none; display: flex; background: #000; border-bottom: 1px solid #000; }
.ribbon section { flex: none; border-right: 1px solid #000; }
.cells { height: 75px; background: #484848; display: grid; grid-auto-flow: column; grid-template-rows: repeat(3, 25px); }
.modes, .c1 { width: 121px; }
.modes .cells, .c1 .cells { grid-template-columns: 120px; }
.c2 { width: 241px; }
.c2 .cells { grid-template-columns: 120px 120px; }
.c3 { width: 361px; }
.c3 .cells { grid-template-columns: repeat(3, 120px); }
.icons3 { width: 79px; }
.icons3 .cells { grid-template-columns: repeat(3, 26px); }
.icons2 { width: 53px; }
.icons2 .cells { grid-template-columns: repeat(2, 26px); }
.ribbon .rest { flex: 1; border: 0; }
.cmd { display: flex; align-items: center; gap: 5px; padding-left: 5px; line-height: 11px; }
.dim { color: #858585; }
.sub { position: relative; }
.sub::after { content: ""; position: absolute; left: 18px; bottom: 3px; border: 3px solid transparent; border-right-color: #d8d8d8; border-bottom-color: #d8d8d8; }
.ribbon footer { height: 17px; background: #333; display: flex; align-items: center; font-size: 10px; line-height: 15px; letter-spacing: -.38px; padding: 2px 2px 0 0; color: #d4d4d4; }
.ribbon footer span { flex: 1; text-align: center; }
.ribbon footer .long { text-align: left; padding-left: 4px; }
.modes footer { justify-content: center; padding: 0; }
.chev { width: 8px; height: 8px; }
.drop { border: 4px solid transparent; border-top-color: #d0d0d0; border-bottom: 0; margin-right: 7px; }
.grip { width: 5px; height: 9px; margin-bottom: 2px; background: repeating-linear-gradient(#b0b0b0 0 1px, #333 1px 2.660px); -webkit-mask: linear-gradient(90deg, #000 2px, transparent 2px 3px, #000 3px); mask: linear-gradient(90deg, #000 2px, transparent 2px 3px, #000 3px); }

main { flex: 1; display: flex; min-height: 0; }
.strip { width: 26px; background: #333; flex: none; }
.strip b { height: 25px; background: #484848; }
.strip .on { background: #000; }
.fx { font: italic 20px/20px "Liberation Serif", serif; }
.fx sub { font: 14px/0 "Noto Sans", sans-serif; align-self: flex-end; padding-bottom: 10px; }
.panel { width: 312px; flex: none; border: solid #000; border-width: 0 1px; display: flex; flex-direction: column; background: #484848; }
.title { height: 17px; flex: none; background: #333; border-bottom: 1px solid #000; display: flex; justify-content: space-between; align-items: center; padding: 0 0 0 3px; letter-spacing: -.65px; line-height: 15px; }
.subject { height: 58px; flex: none; border-bottom: 1px solid #000; box-shadow: 0 1px #333; }
.line { display: flex; height: 25px; padding-right: 3px; align-items: center; }
.line > span { flex: 1; font-size: 10px; padding: 0 0 3px 3px; letter-spacing: -.4px; }
.help { width: 16px; height: 16px; border-radius: 50%; background: #d0d0d0; color: #333; font: 700 13px/16px "Open Sans", sans-serif; margin-right: 5px; }
.treebtn { width: 26px; height: 25px; background: #000; color: #fff; }
.act { justify-content: flex-end; gap: 11px; padding: 0 7px 0 0; height: 31px; }
.form { flex: 1; padding-top: 20px; }
h2 { margin: 0; height: 16px; padding-left: 120px; font-size: 12px; line-height: 16px; font-weight: 500; letter-spacing: -.43px; position: relative; color: #dcdcdc; }
h2::before { content: ""; position: absolute; left: 108px; top: 5px; width: 6px; height: 6px; border: solid #d0d0d0; border-width: 1.500px 0 0 1.500px; transform: rotate(45deg); }
.row { display: flex; height: 24px; margin-top: 4px; gap: 3px; }
h2 + .row { margin-top: 6px; }
.check + .row { margin-top: 6px; }
.row label { width: 117px; display: flex; flex-direction: column; justify-content: center; text-align: right; font-size: 11.500px; line-height: 11px; letter-spacing: -.46px; color: #c0c0c0; padding-bottom: 2px; }
.input { width: 146px; border: 1px solid #bdbdbd; background: #646464; padding-left: 5px; line-height: 24px; letter-spacing: -.6px; }
.input.off { background: #484848; color: #858585; }
.check { display: flex; align-items: center; gap: 3px; height: 16px; margin: 8px 0 0 120px; color: #d6d6d6; letter-spacing: -.36px; }
.row + .check { margin-top: 6px; }
.check i { width: 16px; height: 16px; border: 1px solid #d0d0d0; }
.check svg { width: 14px; height: 14px; stroke-width: 1.700; }
.check.off { color: #858585; }
.check.off i { border-color: #858585; }
.check + h2 { margin-top: 19px; }
.check + .last { margin-top: 20px; }
h2 + .check { margin-top: 8px; }
.status { height: 21px; flex: none; border-top: 1px solid #000; background: #383838; display: flex; align-items: center; gap: 3px; padding: 2px 6px 0 4px; letter-spacing: -.28px; line-height: 18px; }
.status svg { width: 13px; height: 11px; }
.status .close { width: 8px; height: 8px; margin-left: auto; margin-bottom: 3px; overflow: visible; }

.viewport { flex: 1; position: relative; background: linear-gradient(#4c4c4c, #404040 50%, #333); }
.scene { position: absolute; inset: 0; width: 1582px; height: 894px; stroke: none; }
.body { fill: #d5d9f6; stroke: #a4a6b4; stroke-width: .8; }
.edges { fill: none; stroke: #9a9eb8; stroke-width: .6; stroke-dasharray: 34 4; }
.light { fill: none; stroke: #fff; stroke-width: .7; stroke-dasharray: 40 12; }
.ax { font: 12px "Noto Sans", sans-serif; letter-spacing: 0; }

.toolbar { position: absolute; left: 510px; top: -1px; height: 27px; display: flex; background: #484848; border: 1px solid #000; border-right: 0; }
.tgrip { width: 17px; background: #333; border-right: 1px solid #000; padding: 4px 0 0 3px; color: #b0b0b0; }
.tgrip svg { width: 11px; height: 6px; }
.toolbar .tg { display: flex; border-right: 1px solid #000; }
.toolbar .nb { border-right: 0; }
.toolbar .bl { border-left: 1px solid #000; margin-left: 1px; }
.toolbar .gap1 { margin-left: 1px; }
.toolbar .gap2 { margin-left: 2px; }
.tg b { width: 26px; }
.tg .m25 { width: 25px; }
.tg .m27 { width: 27px; }
.tg .m28 { width: 28px; }
.tg .wide { width: 24px; }
.tg .n { width: 21px; }
.tg .drop { border-width: 5px 5px 0; margin: 0; }
.tg.on .drop { border-top-color: #fff; }

.treebar { position: absolute; left: 0; top: 26px; display: flex; }
.treebar b { width: 26px; height: 25px; }
.modeltree { position: absolute; left: 0; top: 55px; margin: 0; padding: 0; list-style: none; letter-spacing: -.33px; }
.modeltree li { display: flex; align-items: center; height: 26px; gap: 2px; padding-left: 5px; }
.modeltree .root { padding-left: 39px; letter-spacing: -.56px; }
.down { border: 3px solid transparent; border-top: 5px solid #d0d0d0; border-bottom: 0; margin-right: 3px; }
.eye { width: 16px; margin-bottom: 2px; }
.right { border: 3px solid transparent; border-left: 5px solid #d0d0d0; border-right: 0; margin: 0 3px 0 27px; }
.first { margin-left: 37px; }
.dot { width: 8px; height: 8px; border-radius: 50%; background: #d0d0d0; margin: 0 2px 0 3px; }
.mic { position: absolute; right: 16px; bottom: 3px; width: 24px; height: 26px; background: #000; color: #fff; display: flex; align-items: center; justify-content: center; }
```
